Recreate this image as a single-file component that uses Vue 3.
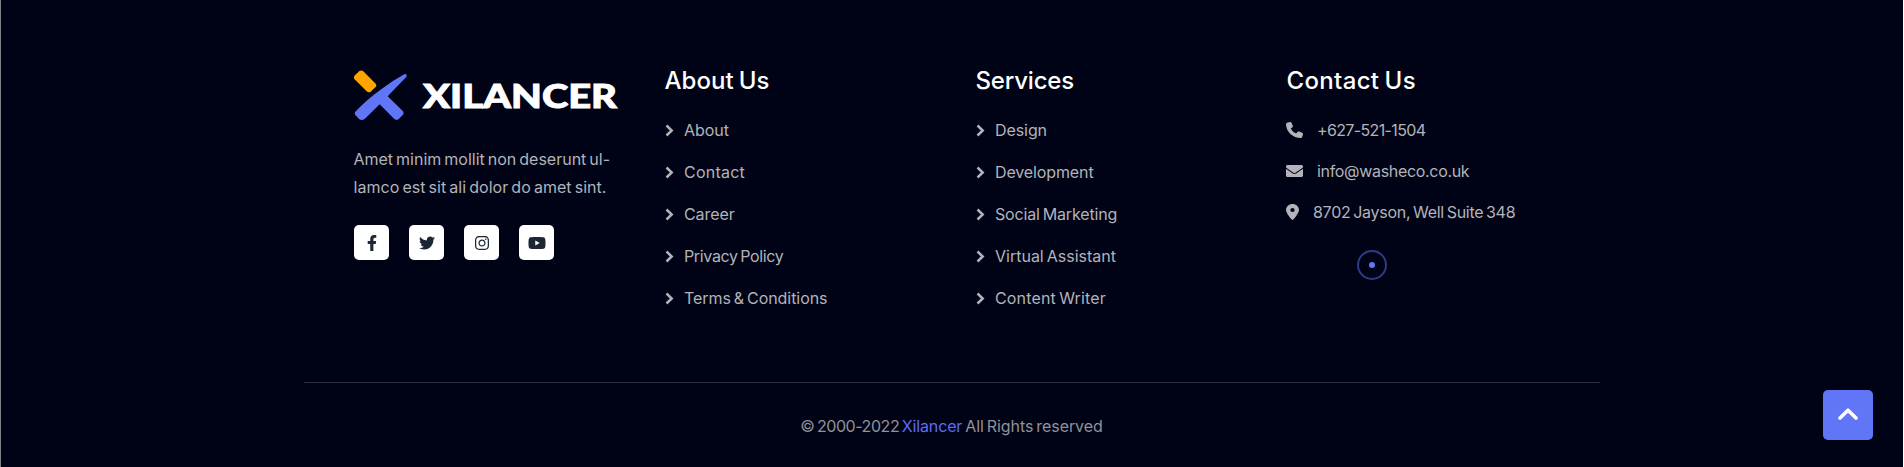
<script setup>
const about = [
  ['About', 45],
  ['Contact', 61],
  ['Career', 50.7],
  ['Privacy Policy', 99.5],
  ['Terms & Conditions', 143.5],
]
const services = [
  ['Design', 52],
  ['Development', 98.5],
  ['Social Marketing', 122.2],
  ['Virtual Assistant', 121],
  ['Content Writer', 111],
]
const columns = [
  { title: 'About Us', width: 105, links: about },
  { title: 'Services', width: 98.5, links: services },
]
const contacts = [
  {
    text: '+627-521-1504', width: 108.5, box: '0 0 512 512', kind: 'phone',
    path: 'M164.900 24.600c-7.700-18.600-28-28.500-47.400-23.200l-88 24C12.100 30.200 0 46 0 64c0 247.400 200.600 448 448 448c18 0 33.800-12.100 38.600-29.500l24-88c5.300-19.400-4.600-39.700-23.200-47.400l-96-40c-16.300-6.800-35.200-2.100-46.300 11.600L304.700 368C234.300 334.700 177.300 277.700 144 207.300L193.300 167c13.700-11.200 18.400-30 11.600-46.300l-40-96z',
  },
  {
    text: 'info@washeco.co.uk', width: 152.3, box: '0 64 512 384', kind: 'mail',
    path: 'M502.300 190.800c3.900-3.100 9.700-.2 9.700 4.700V400c0 26.500-21.500 48-48 48H48c-26.500 0-48-21.500-48-48V195.600c0-5 5.700-7.800 9.700-4.700 22.400 17.400 52.100 39.500 154.100 113.600 21.100 15.400 56.700 47.800 92.200 47.600 35.700.3 72-32.800 92.300-47.600 102-74.100 131.600-96.300 154-113.700zM256 320c23.200.4 56.600-29.200 73.400-41.400 132.700-96.300 142.800-104.700 173.400-128.700 5.800-4.500 9.200-11.500 9.200-18.900v-19c0-26.500-21.500-48-48-48H48c-26.500 0-48 21.500-48 48v19c0 7.400 3.400 14.300 9.200 18.900 30.600 23.900 40.700 32.400 173.400 128.700 16.800 12.200 50.200 41.800 73.400 41.400z',
  },
  {
    text: '8702 Jayson, Well Suite 348', width: 202.3, box: '0 0 384 512', kind: 'pin',
    path: 'M215.700 499.200C267 435 384 279.400 384 192C384 86 298 0 192 0S0 86 0 192c0 87.400 117 243 168.300 307.200c12.300 15.300 35.100 15.300 47.400 0zM192 128a64 64 0 1 1 0 128 64 64 0 1 1 0-128z',
  },
]
const socials = [
  {
    name: 'Facebook', box: '0 0 320 512', width: 10,
    path: 'M279.140 288l14.220-92.660h-88.910v-60.130c0-25.350 12.420-50.060 52.240-50.060h40.420V6.260S260.430 0 225.360 0c-73.220 0-121.080 44.380-121.080 124.720v70.620H22.890V288h81.390v224h100.170V288z',
  },
  {
    name: 'Twitter', box: '0 0 512 512', width: 16,
    path: 'M459.370 151.716c.325 4.548.325 9.097.325 13.645 0 138.720-105.583 298.558-298.558 298.558-59.452 0-114.680-17.219-161.137-47.106 8.447.974 16.568 1.299 25.340 1.299 49.055 0 94.213-16.568 130.274-44.832-46.132-.975-84.792-31.188-98.112-72.772 6.498.974 12.995 1.624 19.818 1.624 9.421 0 18.843-1.300 27.614-3.573-48.081-9.747-84.143-51.980-84.143-102.985v-1.299c13.969 7.797 30.214 12.670 47.431 13.319-28.264-18.843-46.781-51.005-46.781-87.391 0-19.492 5.197-37.360 14.294-52.954 51.655 63.675 129.300 105.258 216.365 109.807-1.624-7.797-2.599-15.918-2.599-24.040 0-57.828 46.782-104.934 104.934-104.934 30.213 0 57.502 12.670 76.670 33.137 23.715-4.548 46.456-13.320 66.599-25.340-7.798 24.366-24.366 44.833-46.132 57.827 21.117-2.273 41.584-8.122 60.426-16.243-14.292 20.791-32.161 39.308-52.628 54.253z',
  },
  {
    name: 'Instagram', box: '0 0 448 512', width: 14,
    path: 'M224.100 141c-63.600 0-114.900 51.300-114.900 114.900s51.300 114.900 114.900 114.900S339 319.500 339 255.900 287.700 141 224.100 141zm0 189.600c-41.100 0-74.700-33.500-74.700-74.700s33.500-74.700 74.700-74.700 74.700 33.500 74.700 74.700-33.600 74.700-74.700 74.700zm146.400-194.300c0 14.900-12 26.800-26.800 26.800-14.900 0-26.800-12-26.800-26.800s12-26.800 26.800-26.800 26.800 12 26.800 26.800zm76.100 27.200c-1.700-35.900-9.900-67.700-36.200-93.900-26.200-26.200-58-34.400-93.900-36.200-37-2.100-147.900-2.100-184.900 0-35.800 1.700-67.600 9.900-93.900 36.100s-34.400 58-36.200 93.900c-2.100 37-2.100 147.900 0 184.900 1.700 35.900 9.900 67.700 36.200 93.900s58 34.400 93.900 36.200c37 2.100 147.900 2.100 184.900 0 35.900-1.700 67.700-9.900 93.900-36.200 26.200-26.200 34.400-58 36.200-93.900 2.100-37 2.100-147.800 0-184.800zM398.800 388c-7.800 19.600-22.900 34.700-42.600 42.600-29.500 11.700-99.500 9-132.100 9s-102.700 2.600-132.100-9c-19.600-7.800-34.700-22.900-42.600-42.600-11.700-29.500-9-99.500-9-132.100s-2.600-102.700 9-132.100c7.800-19.600 22.900-34.700 42.600-42.600 29.500-11.700 99.500-9 132.100-9s102.700-2.600 132.100 9c19.600 7.800 34.700 22.900 42.600 42.600 11.700 29.500 9 99.500 9 132.100s2.700 102.700-9 132.100z',
  },
  {
    name: 'YouTube', box: '0 0 576 512', width: 18,
    path: 'M549.655 124.083c-6.281-23.650-24.787-42.276-48.284-48.597C458.781 64 288 64 288 64S117.220 64 74.629 75.486c-23.497 6.322-42.003 24.947-48.284 48.597-11.412 42.867-11.412 132.305-11.412 132.305s0 89.438 11.412 132.305c6.281 23.650 24.787 41.500 48.284 47.821C117.220 448 288 448 288 448s170.780 0 213.371-11.486c23.497-6.321 42.003-24.171 48.284-47.821 11.412-42.867 11.412-132.305 11.412-132.305s0-89.438-11.412-132.305zm-317.510 213.508V175.185l142.739 81.205-142.739 81.201z',
  },
]

// Tracks a single line of text so that it fills the given width.
const vFit = {
  mounted(el, { value }) {
    const natural = el.getBoundingClientRect().width
    el.style.letterSpacing = `${(value - natural) / el.textContent.length}px`
  },
}
</script>

<template>
  <footer class="footer">
    <div class="widgets">
      <section class="col brand">
        <svg class="logo" width="266" height="52" viewBox="0 0 266 52" role="img" aria-label="Xilancer">
          <g transform="translate(-13 -15) scale(.33333)">
            <path fill="#6176f6" d="M193 58C150 82 95 120 46 170Q42 175 46 180L58 193Q66 198 74 192L119 148L163 192Q170 197 176 192L189 179Q193 174 189 169L143 124Q175 90 199 66Q202 55 193 58Z" />
            <path fill="#ffa500" d="M58 48Q64 44 70 49L107 86Q111 92 106 97L92 110Q86 114 80 109L43 72Q40 66 45 61Z" />
          </g>
          <text x="70" y="38.200" textLength="194" lengthAdjust="spacingAndGlyphs">XILANCER</text>
        </svg>
        <p class="blurb">
          <span v-fit="256.5">Amet minim mollit non deserunt ul-</span><br>
          <span v-fit="253">lamco est sit ali dolor do amet sint.</span>
        </p>
        <div class="socials">
          <a v-for="s in socials" :key="s.name" class="social" :aria-label="s.name">
            <svg :width="s.width" height="16" :viewBox="s.box"><path :d="s.path" /></svg>
          </a>
        </div>
      </section>

      <section v-for="c in columns" :key="c.title" class="col">
        <h4 class="title"><span v-fit="c.width">{{ c.title }}</span></h4>
        <ul class="links">
          <li v-for="[label, width] in c.links" :key="label">
            <svg class="angle" width="9" height="13" viewBox="0 0 9 13"><path d="M1.500 1.500L6.700 6.500L1.500 11.500" /></svg>
            <span v-fit="width">{{ label }}</span>
          </li>
        </ul>
      </section>

      <section class="col">
        <h4 class="title"><span v-fit="129.500">Contact Us</span></h4>
        <ul class="contacts">
          <li v-for="c in contacts" :key="c.kind">
            <svg :class="c.kind" :viewBox="c.box" preserveAspectRatio="none"><path :d="c.path" /></svg>
            <span v-fit="c.width">{{ c.text }}</span>
          </li>
        </ul>
      </section>
    </div>

    <div class="copyright">
      <span v-fit="101.500" class="pre">© 2000-2022 </span><a v-fit="60.500" class="pre">Xilancer</a><span v-fit="140.500" class="pre"> All Rights reserved</span>
    </div>

    <div class="cursor"></div>
    <button class="to-top" aria-label="Back to top">
      <svg width="20" height="12" viewBox="0 0 20 12"><path d="M2 10L10 2.200L18 10" /></svg>
    </button>
  </footer>
</template>

<style>
body {
  background: #fff;
  overflow: hidden;
}
</style>

<style scoped>
.footer {
  position: relative;
  box-sizing: border-box;
  height: 467px;
  margin-right: 1px;
  padding: 65px 0 0 303px;
  border-left: 1px solid #808087;
  background: #000316;
  color: #b3b3b9;
  font: 400 16px/28px Inter, "Noto Sans", sans-serif;
  word-spacing: -1.500px;
}
.widgets {
  box-sizing: border-box;
  display: grid;
  grid-template-columns: repeat(4, 311px);
  width: 1296px;
  height: 318px;
  padding-left: 49.500px;
  border-bottom: 1px solid #2b2d3c;
}
span,
a {
  white-space: nowrap;
}
.pre {
  display: inline-block;
  white-space: pre;
}
.logo {
  display: block;
  margin: 5px 0 0 -.5px;
}
.logo text {
  fill: #fff;
  stroke: #fff;
  stroke-width: .9px;
  font: 900 31.500px Lato, sans-serif;
}
.blurb {
  margin: 23px 0 0;
}
.socials {
  display: flex;
  gap: 20px;
  margin: 24px 0 0 .5px;
}
.social {
  display: flex;
  align-items: center;
  justify-content: center;
  width: 35px;
  height: 35px;
  border-radius: 5px;
  background: #fff;
}
.social path {
  fill: #1d2635;
}
.title {
  margin: 0;
  color: #fff;
  font-size: 24px;
  font-weight: 500;
  line-height: 31px;
}
ul {
  margin: 0;
  padding: 0;
  list-style: none;
}
.links {
  display: grid;
  gap: 14px;
  margin-top: 20px;
}
.links li {
  display: flex;
  align-items: center;
}
.angle {
  margin-right: 10.500px;
}
.angle path {
  fill: none;
  stroke: #b3b3b9;
  stroke-width: 2.500;
}
.contacts {
  display: grid;
  gap: 13px;
  margin: 20px 0 0 -.5px;
}
.contacts li {
  display: flex;
  align-items: center;
}
.contacts path {
  fill: #b3b3b9;
}
.phone {
  width: 17px;
  height: 16px;
  margin-right: 14px;
}
.mail {
  width: 17px;
  height: 12px;
  margin-right: 14px;
}
.pin {
  width: 13px;
  height: 16px;
  margin-right: 14px;
}
.copyright {
  display: flex;
  justify-content: center;
  width: 1295px;
  padding-top: 29px;
  color: #91929a;
}
.copyright a {
  color: #5c6cf5;
}
.cursor {
  position: absolute;
  top: 250px;
  left: 1356px;
  box-sizing: border-box;
  width: 30px;
  height: 30px;
  border: 2px solid #303b83;
  border-radius: 50%;
}
.cursor::after {
  content: "";
  position: absolute;
  inset: 10px;
  border-radius: 50%;
  background: #6176f6;
}
.to-top {
  position: absolute;
  top: 390px;
  right: 30px;
  display: flex;
  align-items: center;
  justify-content: center;
  width: 50px;
  height: 50px;
  padding: 0 0 2px;
  border: 0;
  border-radius: 5px;
  background: #6176f6;
}
.to-top path {
  fill: none;
  stroke: #fff;
  stroke-width: 3.600;
  stroke-linecap: round;
  stroke-linejoin: round;
}
</style>
